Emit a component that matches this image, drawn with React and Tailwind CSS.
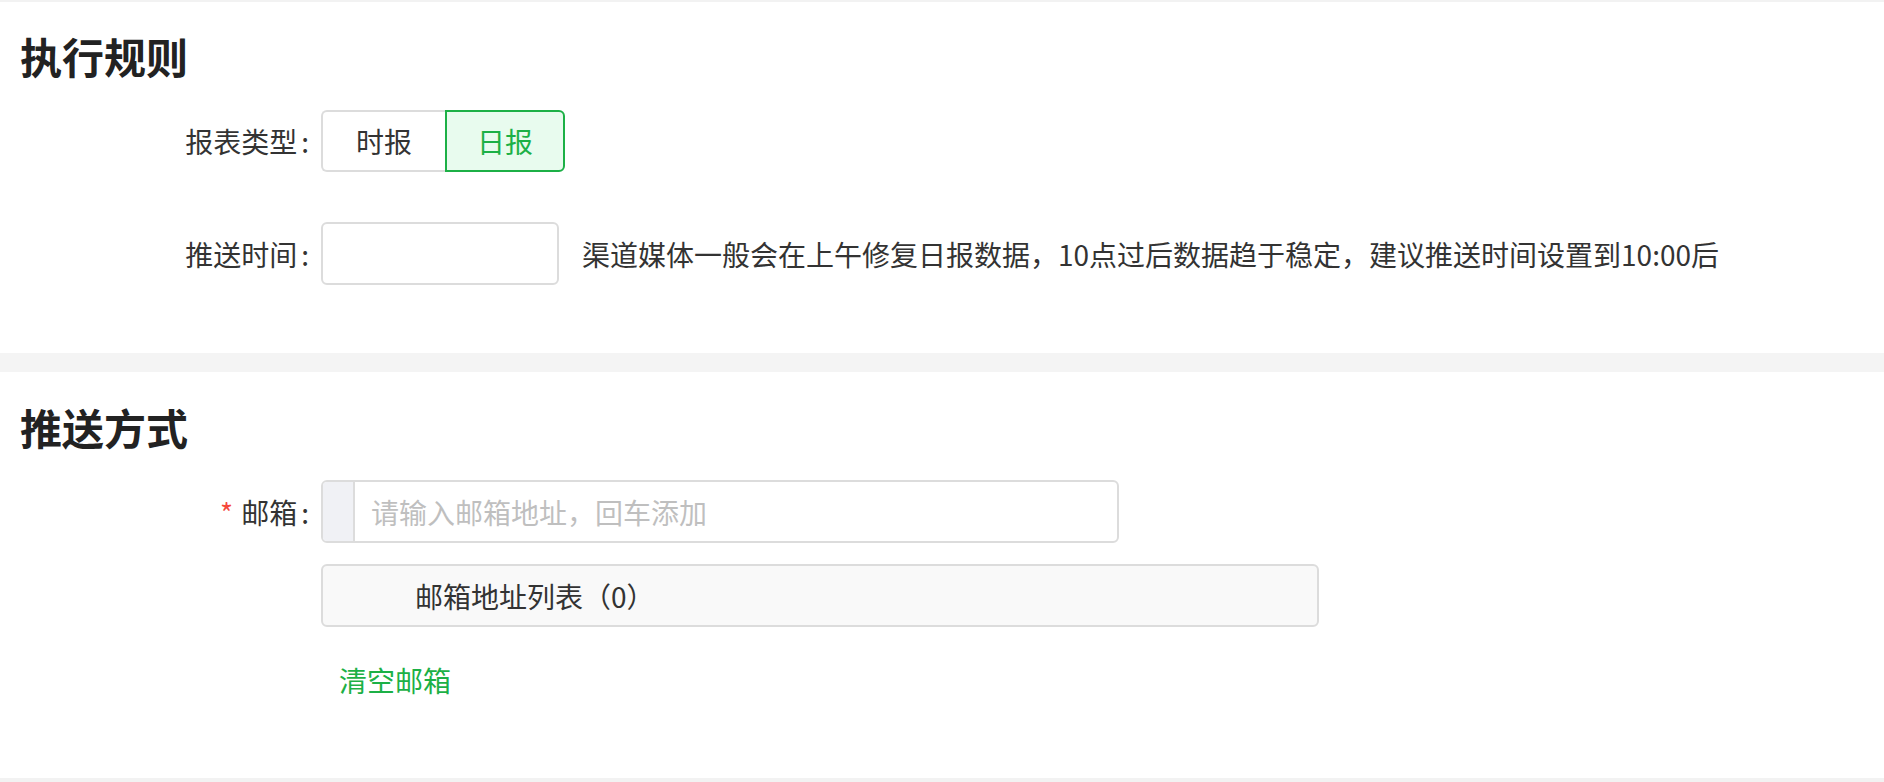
const font = { fontFamily: '"PingFang SC", "Noto Sans CJK SC", "Noto Sans", sans-serif' };

function Label({ children, required }) {
  return (
    <div className="w-[289px] shrink-0 text-right text-[28px] leading-[40px] text-[#333]">
      {required && <span className="mr-2 text-[#f5483b]">*</span>}
      {children}
      <span className="ml-1">:</span>
    </div>
  );
}

export default function App() {
  return (
    <div className="w-[1884px] h-[782px] bg-white flex flex-col" style={font}>
      <div className="h-[2px] bg-[#f2f2f2]" />

      <section className="pt-6 pb-[68px] pl-5">
        <h2 className="text-[42px] leading-[59px] font-semibold text-[#222]">执行规则</h2>

        <div className="mt-[25px] flex items-center gap-3">
          <Label>报表类型</Label>
          <div className="flex">
            <button className="h-[62px] w-[124px] rounded-l-md border-2 border-r-0 border-[#dcdcdc] bg-white text-[28px] text-[#333]">
              时报
            </button>
            <button className="h-[62px] w-[120px] rounded-r-md border-2 border-[#1cb046] bg-[#e8fbee] text-[28px] text-[#1cb046]">
              日报
            </button>
          </div>
        </div>

        <div className="mt-[50px] flex items-center gap-3">
          <Label>推送时间</Label>
          <div className="h-[63px] w-[238px] rounded-md border-2 border-[#dcdcdc] bg-white" />
          <p className="ml-[11px] text-[28px] text-[#333]">
            渠道媒体一般会在上午修复日报数据，10点过后数据趋于稳定，建议推送时间设置到10:00后
          </p>
        </div>
      </section>

      <div className="h-[19px] bg-[#f4f4f4]" />

      <section className="pt-[25px] pl-5 flex-1">
        <h2 className="text-[42px] leading-[59px] font-semibold text-[#222]">推送方式</h2>

        <div className="mt-6 flex items-center gap-3">
          <Label required>邮箱</Label>
          <div className="flex h-[63px] w-[798px] overflow-hidden rounded-md border-2 border-[#dcdcdc]">
            <div className="w-[32px] bg-[#f0f1f5] border-r-2 border-[#dcdcdc]" />
            <input
              className="flex-1 px-4 text-[28px] text-[#333] outline-none placeholder:text-[#bfbfbf]"
              placeholder="请输入邮箱地址，回车添加"
            />
          </div>
        </div>

        <div className="mt-[21px] ml-[301px]">
          <div className="flex h-[63px] w-[998px] items-center rounded-md border-2 border-[#dcdcdc] bg-[#f9f9f9] pl-[92px] text-[28px] text-[#333]">
            邮箱地址列表（0）
          </div>
          <button className="mt-[33px] ml-[18px] text-[28px] leading-[40px] text-[#1cb046]">清空邮箱</button>
        </div>
      </section>

      <div className="h-[4px] bg-[#f2f2f2]" />
    </div>
  );
}
